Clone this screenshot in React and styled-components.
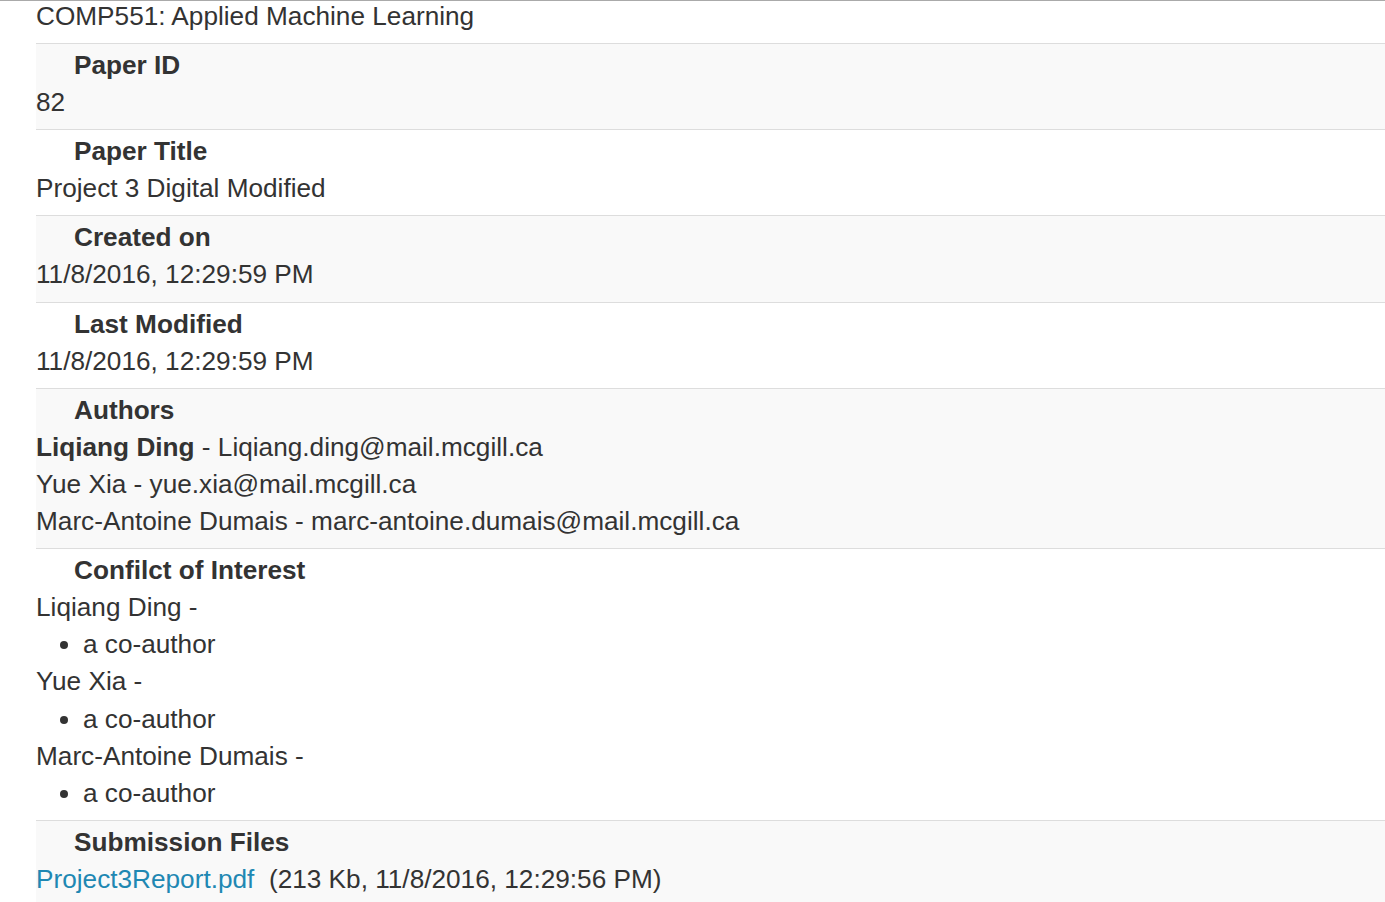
import React from "react";
import styled, { createGlobalStyle } from "styled-components";

const GlobalStyle = createGlobalStyle`
  html, body {
    margin: 0;
    padding: 0;
    background: #fff;
  }
  body {
    font-family: "Liberation Sans", Arial, sans-serif;
    font-size: 26.2px;
    line-height: 37.1px;
    color: #333;
  }
`;

const Page = styled.div`
  border-top: 1px solid #aaa;
  padding-left: 36px;
`;

const Course = styled.div`
  height: 42px;
  line-height: 30px;
`;

const Table = styled.div`
  display: flex;
  flex-direction: column;
`;

// 한 줄씩 줄무늬
const Row = styled.div`
  border-top: 1px solid #ddd;
  padding: 3px 0 8px 0;
  background-color: ${props => (props.striped ? "#f9f9f9" : "#fff")};
`;

const Label = styled.div`
  font-weight: bold;
  padding-left: 38px;
`;

const Line = styled.div``;

const Bold = styled.b``;

const Bullets = styled.ul`
  margin: 0;
  padding-left: 47px;
  list-style: disc;
`;

const FileLink = styled.a`
  color: #1f88b3;
  text-decoration: none;
`;

const authors = [
  { name: "Liqiang Ding", email: "Liqiang.ding@mail.mcgill.ca", me: true },
  { name: "Yue Xia", email: "yue.xia@mail.mcgill.ca" },
  { name: "Marc-Antoine Dumais", email: "marc-antoine.dumais@mail.mcgill.ca" }
];

const App = () => {
  return (
    <Page>
      <GlobalStyle />
      <Course>COMP551: Applied Machine Learning</Course>
      <Table>
        <Row striped>
          <Label>Paper ID</Label>
          <Line>82</Line>
        </Row>
        <Row>
          <Label>Paper Title</Label>
          <Line>Project 3 Digital Modified</Line>
        </Row>
        <Row striped>
          <Label>Created on</Label>
          <Line>11/8/2016, 12:29:59 PM</Line>
        </Row>
        <Row>
          <Label>Last Modified</Label>
          <Line>11/8/2016, 12:29:59 PM</Line>
        </Row>
        <Row striped>
          <Label>Authors</Label>
          {authors.map(a => (
            <Line key={a.email}>
              {a.me ? <Bold>{a.name}</Bold> : a.name} - {a.email}
            </Line>
          ))}
        </Row>
        <Row>
          <Label>Confilct of Interest</Label>
          {authors.map(a => (
            <React.Fragment key={a.name}>
              <Line>{a.name} -</Line>
              <Bullets>
                <li>a co-author</li>
              </Bullets>
            </React.Fragment>
          ))}
        </Row>
        <Row striped>
          <Label>Submission Files</Label>
          <Line>
            <FileLink href="#">Project3Report.pdf</FileLink>
            &nbsp; (213 Kb, 11/8/2016, 12:29:56 PM)
          </Line>
        </Row>
      </Table>
    </Page>
  );
};

export default App;
